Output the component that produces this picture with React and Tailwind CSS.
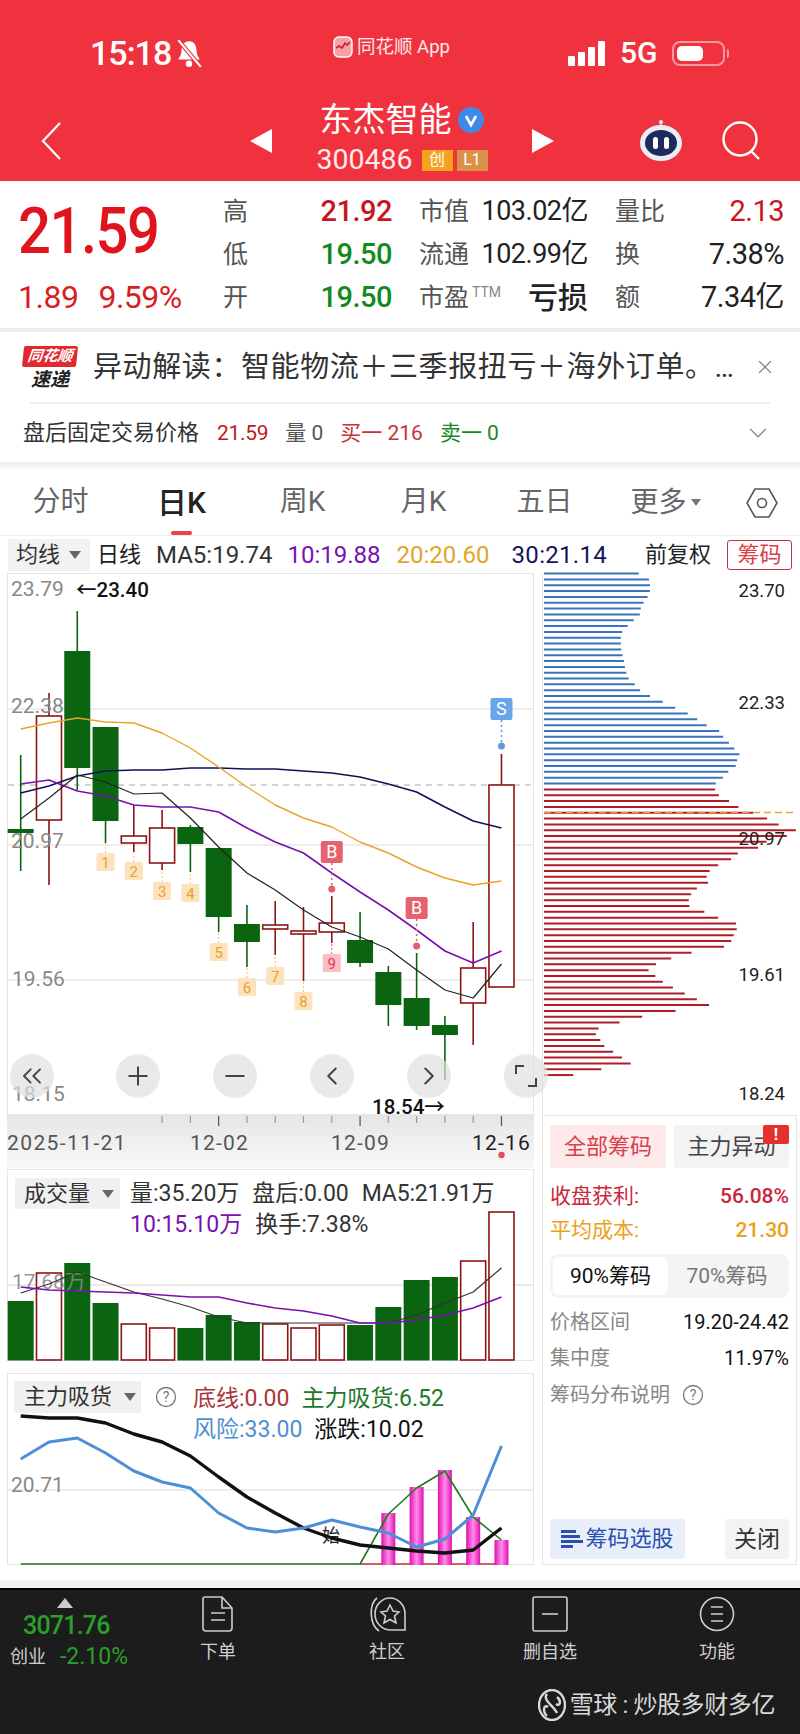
import React from 'react';
import { ChevronsLeft, ChevronLeft, ChevronRight, Plus, Minus, ChevronDown, X } from 'lucide-react';

const xs = Array.from({ length: 18 }, (_, i) => 20.7 + i * 28.28);
const RED = '#8c1414';
const GREEN = '#0b640f';

// kline: [high, top, bottom, low, up?]
const candles = [
  [755, 829, 833, 871, 0],
  [693, 716, 820, 885, 1],
  [611, 651, 768, 790, 0],
  [727, 727, 821, 843, 0],
  [805, 836, 843, 852, 1],
  [810, 828, 863, 870, 1],
  [825, 827, 844, 872, 0],
  [848, 848, 917, 932, 0],
  [905, 924, 942, 967, 0],
  [901, 925, 929, 955, 1],
  [907, 931, 934, 981, 1],
  [896, 923, 932, 943, 1],
  [912, 940, 963, 967, 0],
  [966, 972, 1005, 1026, 0],
  [953, 998, 1026, 1030, 0],
  [1016, 1025, 1035, 1080, 0],
  [922, 968, 1003, 1045, 1],
  [754, 785, 987, 987, 1],
];

const ma5 = [819, 798, 775, 782, 794, 793, 818, 847, 873, 890, 910, 927, 937, 949, 970, 990, 998, 964];
const ma10 = [784, 780, 791, 796, 805, 807, 807, 812, 828, 842, 853, 873, 892, 910, 930, 951, 963, 951];
const ma20 = [729, 723, 718, 722, 723, 733, 748, 767, 787, 805, 818, 827, 842, 853, 867, 878, 885, 881];
const ma30 = [793, 786, 776, 771, 770, 770, 768, 768, 769, 769, 771, 773, 777, 784, 792, 807, 821, 828];

const markers = [
  [3, 853, '1'], [4, 862, '2'], [5, 882, '3'], [6, 884, '4'], [7, 943, '5'],
  [8, 978, '6'], [9, 967, '7'], [10, 992, '8'], [11, 954, '9'],
];

const volTops = [1301, 1273, 1263, 1303, 1324, 1328, 1328, 1315, 1322, 1324, 1328, 1325, 1325, 1307, 1280, 1277, 1261, 1212];
const volUp = [0, 1, 0, 0, 1, 1, 0, 0, 0, 1, 1, 1, 0, 0, 0, 0, 1, 1];
const volBlack = [1293, 1284, 1272, 1282, 1292, 1299, 1307, 1317, 1323, 1323, 1323, 1323, 1323, 1323, 1315, 1303, 1292, 1268];
const volPurple = [1287, 1290, 1291, 1292, 1293, 1295, 1297, 1297, 1303, 1308, 1311, 1316, 1323, 1323, 1320, 1315, 1308, 1297];

const riskLine = [1459, 1442, 1438, 1453, 1471, 1482, 1488, 1513, 1528, 1532, 1528, 1520, 1527, 1533, 1547, 1539, 1515, 1446];
const blackLine = [1416, 1418, 1418, 1423, 1434, 1442, 1456, 1477, 1497, 1513, 1528, 1538, 1545, 1548, 1551, 1553, 1550, 1528];
const greenLine = [1564, 1564, 1564, 1564, 1564, 1564, 1564, 1564, 1564, 1564, 1564, 1564, 1564, 1514, 1488, 1471, 1517, 1540];
const pinkBars = [[13, 1513], [14, 1487], [15, 1470], [16, 1517], [17, 1540]];

const blueBars = [322, 352, 355, 355, 348, 336, 328, 325, 307, 289, 273, 269, 269, 270, 274, 278, 281, 285, 292, 310, 326, 355, 393, 430, 467, 495, 523, 560, 572, 589, 605, 620, 613, 609, 587, 571, 550];
const redBars = [548, 559, 589, 617, 660, 702, 736, 787, 760, 700, 675, 615, 595, 557, 532, 523, 527, 494, 477, 470, 472, 516, 557, 610, 612, 603, 596, 574, 478, 418, 373, 351, 371, 393, 423, 458, 494, 530, 431, 332, 265, 203, 195, 208, 220, 246, 272, 298, 211, 128];

const toPoints = (ys) => ys.map((y, i) => `${xs[i]},${y}`).join(' ');

const Line = ({ ys, color, width = 1.6 }) => (
  <polyline points={toPoints(ys)} fill="none" stroke={color} strokeWidth={width} strokeLinejoin="round" />
);

const Triangle = ({ className }) => <span className={`inline-block w-0 h-0 border-l-[6px] border-r-[6px] border-t-[8px] border-l-transparent border-r-transparent border-t-[#666] ${className || ''}`} />;

const Help = ({ size = 22 }) => (
  <svg width={size} height={size} viewBox="0 0 22 22" className="text-[#777]">
    <circle cx="11" cy="11" r="9.5" fill="none" stroke="currentColor" strokeWidth="1.3" />
    <text x="11" y="16" textAnchor="middle" fontSize="14" fill="currentColor">?</text>
  </svg>
);

const Candle = ({ c, i }) => {
  const x = xs[i];
  const color = c[4] ? RED : GREEN;
  return (
    <g>
      <line x1={x} x2={x} y1={c[0]} y2={c[1]} stroke={color} strokeWidth="1.6" />
      <line x1={x} x2={x} y1={c[2]} y2={c[3]} stroke={color} strokeWidth="1.6" />
      {c[4] ? (
        <rect x={x - 12.5} y={c[1]} width="25" height={c[2] - c[1]} fill="#fff" stroke={color} strokeWidth="1.6" />
      ) : (
        <rect x={x - 13} y={c[1]} width="26" height={c[2] - c[1]} fill={color} />
      )}
    </g>
  );
};

const Tag = ({ x, y, label, color }) => (
  <g>
    <rect x={x - 11} y={y} width="22" height="22" rx="2" fill={color} />
    <text x={x} y={y + 17} textAnchor="middle" fontSize="18" fill="#fff">{label}</text>
  </g>
);

const KChart = () => (
  <svg width="525" height="540" viewBox="8 574 525 540" className="overflow-visible">
    {[709, 845, 980].map((y) => <line key={y} x1="8" x2="533" y1={y} y2={y} stroke="#e8e8e8" strokeWidth="1.5" />)}
    <line x1="8" x2="533" y1="785" y2="785" stroke="#aaa" strokeWidth="1" strokeDasharray="6 5" />
    {candles.map((c, i) => <Candle key={i} c={c} i={i} />)}
    {markers.map(([i, y, t]) => {
      const pink = t === '9';
      return (
        <g key={t}>
          <line x1={xs[i]} x2={xs[i]} y1={y - 10} y2={y} stroke={pink ? '#e0616d' : '#f0c080'} strokeWidth="1" strokeDasharray="2 2" />
          <rect x={xs[i] - 9} y={y} width="18" height="18" rx="1.5" fill={pink ? '#fbbcc6' : '#fde3bd'} />
          <text x={xs[i]} y={y + 15} textAnchor="middle" fontSize="15" fill={pink ? '#d8404e' : '#e9a030'}>{t}</text>
        </g>
      );
    })}
    <Line ys={ma30} color="#10105a" />
    <Line ys={ma20} color="#e6a526" width={1.4} />
    <Line ys={ma10} color="#7a10b0" />
    <Line ys={ma5} color="#222" width={1.2} />
    {/* B / S flags */}
    <line x1={xs[11]} x2={xs[11]} y1="863" y2="889" stroke="#e0616d" strokeWidth="1.5" strokeDasharray="2 3" />
    <circle cx={xs[11]} cy="889" r="3.5" fill="#e0616d" />
    <Tag x={xs[11]} y={841} label="B" color="#e6626e" />
    <line x1={xs[14]} x2={xs[14]} y1="919" y2="946" stroke="#e0616d" strokeWidth="1.5" strokeDasharray="2 3" />
    <circle cx={xs[14]} cy="946" r="3.5" fill="#e0616d" />
    <Tag x={xs[14]} y={897} label="B" color="#e6626e" />
    <line x1={xs[17]} x2={xs[17]} y1="720" y2="746" stroke="#5e9be0" strokeWidth="1.5" strokeDasharray="2 3" />
    <circle cx={xs[17]} cy="746" r="3.5" fill="#5e9be0" />
    <Tag x={xs[17]} y={698} label="S" color="#6aa5ea" />
    {/* axis labels */}
    <g fontSize="21" fill="#888">
      <text x="11" y="596">23.79</text>
      <text x="11" y="713">22.38</text>
      <text x="11" y="848">20.97</text>
      <text x="12" y="986">19.56</text>
      <text x="12" y="1101">18.15</text>
    </g>
    <text x="76" y="597" fontSize="20.5" fontWeight="500" fill="#111">←23.40</text>
    <text x="372" y="1114" fontSize="20.5" fontWeight="500" fill="#111">18.54→</text>
  </svg>
);

const NavButton = ({ children, className }) => (
  <span className={`flex w-[44px] h-[44px] items-center justify-center rounded-full bg-[#e0e0e0]/70 text-[#444] ${className || ''}`}>{children}</span>
);

const DateAxis = () => (
  <svg width="527" height="53" viewBox="7 1115 527 53">
    <defs>
      <linearGradient id="axisBg" x1="0" x2="0" y1="0" y2="1">
        <stop offset="0" stopColor="#e6e6e6" />
        <stop offset="1" stopColor="#f8f8f8" />
      </linearGradient>
    </defs>
    <rect x="7" y="1115" width="527" height="53" fill="url(#axisBg)" />
    {xs.slice(5).map((x, i) => {
      const major = i === 2 || i === 7 || i === 12;
      return <line key={x} x1={x} x2={x} y1="1116" y2={major ? 1126 : 1123} stroke={major ? '#555' : '#999'} strokeWidth="1.2" />;
    })}
    <g fontSize="21" fill="#555">
      <text x="7" y="1150" letterSpacing="1.4">2025-11-21</text>
      <text x="190" y="1150" letterSpacing="1.2">12-02</text>
      <text x="331" y="1150" letterSpacing="1.2">12-09</text>
      <text x="472" y="1150" letterSpacing="1.2" fill="#222">12-16</text>
    </g>
    <circle cx="501.5" cy="1155" r="3.2" fill="#e0505a" />
  </svg>
);

const VolumeChart = () => (
  <svg width="525" height="190" viewBox="8 1170 525 190" className="overflow-visible">
    <line x1="8" x2="533" y1="1285" y2="1285" stroke="#e4e4e4" strokeWidth="1.5" />
    {volTops.map((top, i) => (volUp[i] ? (
      <rect key={i} x={xs[i] - 12.5} y={top} width="25" height={1360 - top} fill="#fff" stroke={RED} strokeWidth="1.6" />
    ) : (
      <rect key={i} x={xs[i] - 13} y={top} width="26" height={1360.5 - top} fill={GREEN} />
    )))}
    <text x="12" y="1289" fontSize="21" fill="#888" fillOpacity="0.9">17.68万</text>
    <Line ys={volBlack} color="#333" width={1.2} />
    <Line ys={volPurple} color="#7a10b0" width={1.6} />
  </svg>
);

const IndicatorChart = () => (
  <svg width="525" height="190" viewBox="8 1374 525 190" className="overflow-visible">
    <defs>
      <linearGradient id="pinkBar" x1="0" x2="1" y1="0" y2="0">
        <stop offset="0" stopColor="#e010b0" />
        <stop offset="0.5" stopColor="#ff8ce8" />
        <stop offset="1" stopColor="#e010b0" />
      </linearGradient>
    </defs>
    <line x1="8" x2="533" y1="1490" y2="1490" stroke="#e6e6e6" strokeWidth="1.5" />
    <text x="11" y="1492" fontSize="21" fill="#888">20.71</text>
    <line x1={xs[12]} x2="508" y1="1564" y2="1564" stroke="#c43030" strokeWidth="1.5" />
    {pinkBars.map(([i, top]) => <rect key={i} x={xs[i] - 7} y={top} width="14" height={1565 - top} fill="url(#pinkBar)" />)}
    <Line ys={greenLine} color="#1d7a1d" width={1.6} />
    <text x="322" y="1542" fontSize="18" fill="#222">始</text>
    <Line ys={blackLine} color="#111" width={3.4} />
    <Line ys={riskLine} color="#4d8fd6" width={3} />
  </svg>
);

const ChipChart = () => (
  <svg width="254" height="540" viewBox="543 574 254 540" className="overflow-visible">
    {blueBars.map((r, i) => {
      const y = 574.6 + i * 5.83;
      return <line key={i} x1="544" x2={530 + r / 2.96} y1={y} y2={y} stroke="#3b74b8" strokeWidth="2" />;
    })}
    {redBars.map((r, i) => {
      const y = 790.4 + i * 5.83;
      return <line key={i} x1="544" x2={530 + r / 2.96} y1={y} y2={y} stroke="#b01c26" strokeWidth="2" />;
    })}
    <line x1="544" x2="796" y1="813.5" y2="813.5" stroke="#f0a030" strokeWidth="1.4" strokeDasharray="7 4" />
    <g fontSize="18.5" fill="#222" textAnchor="end">
      <text x="785" y="598">23.70</text>
      <text x="785" y="710">22.33</text>
      <text x="785" y="846">20.97</text>
      <text x="785" y="982">19.61</text>
      <text x="785" y="1101">18.24</text>
    </g>
  </svg>
);

const Quote = ({ label, value, valueClass, labelExtra }) => (
  <div className="flex h-[43px] items-center justify-between">
    <span className="flex items-start text-[25px] leading-none text-[#555]">{label}{labelExtra}</span>
    <span className={`leading-none ${valueClass}`}>{value}</span>
  </div>
);

const BottomItem = ({ icon, label }) => (
  <div className="flex flex-col items-center">
    <div className="flex h-[36px] items-center">{icon}</div>
    <span className="mt-[11px] text-[18px] leading-none text-[#d0d0d0]">{label}</span>
  </div>
);

export default function App() {
  return (
    <div className="flex h-[1734px] w-[800px] flex-col overflow-hidden bg-white font-[family-name:Roboto,'Noto_Sans_CJK_SC',sans-serif]">
      {/* red header */}
      <header className="flex h-[181px] flex-col bg-[#f0323e] text-white">
        <div className="mt-[35px] flex h-[36px] items-center pl-[90px]">
          <div className="flex w-[243px] items-center">
            <span className="text-[34px] font-medium leading-none tracking-[-1px]">15:18</span>
            <svg width="30" height="32" viewBox="0 0 28 28" className="ml-[3px]">
              <path d="M14 3c5 0 7 4 7 9 0 4 2 6 3 8H4c1-2 3-4 3-8 0-5 2-9 7-9z" fill="#fff" />
              <circle cx="14" cy="24" r="3" fill="#fff" />
              <line x1="4" y1="2" x2="25" y2="27" stroke="#f0323e" strokeWidth="4" />
              <line x1="4" y1="2" x2="25" y2="27" stroke="#fff" strokeWidth="2" />
            </svg>
          </div>
          <div className="mb-[12px] flex w-[235px] items-center text-white/90">
            <svg width="20" height="22" viewBox="0 0 20 22">
              <rect x="1" y="1" width="18" height="20" rx="5" fill="#f7a0a5" stroke="#fff" strokeWidth="1.5" />
              <path d="M3 12l3-2 3 2 3-5 2 2 3-3" fill="none" stroke="#d02030" strokeWidth="1.6" />
            </svg>
            <span className="ml-[4px] text-[18.5px] leading-none">同花顺 App</span>
          </div>
          <div className="flex items-end gap-[3px]">
            {['h-[10px]', 'h-[14px]', 'h-[19px]', 'h-[25px]'].map((h) => <span key={h} className={`w-[7px] rounded-[1px] bg-white ${h}`} />)}
          </div>
          <span className="ml-[15px] text-[30px] font-medium leading-none">5G</span>
          <div className="ml-[14px] flex h-[25px] w-[53px] items-center rounded-[8px] border-2 border-white/50 p-[3px]">
            <span className="h-full w-[26px] rounded-[5px] bg-white" />
          </div>
          <span className="ml-[2px] h-[9px] w-[2px] rounded-r bg-white/50" />
        </div>
        <div className="mt-[29px] flex h-[81px] items-center pl-[41px]">
          <svg width="20" height="38" viewBox="0 0 20 38">
            <polyline points="19,1 2,19 19,37" fill="none" stroke="#fff" strokeWidth="2.2" />
          </svg>
          <svg width="22" height="24" viewBox="0 0 22 24" className="ml-[189px]"><polygon points="22,0 22,24 0,12" fill="#fff" /></svg>
          <div className="flex w-[260px] flex-col items-center self-stretch">
            <div className="flex h-[40px] items-center">
              <span className="text-[33px] leading-none">东杰智能</span>
              <svg width="28" height="28" viewBox="0 0 28 28" className="ml-[5px]">
                <circle cx="14" cy="14" r="13" fill="#3f8ae8" />
                <path d="M9 10l5 9 5-9" fill="none" stroke="#fff" strokeWidth="2.6" />
              </svg>
            </div>
            <div className="flex h-[42px] items-center">
              <span className="text-[28.5px] leading-none text-white/90">300486</span>
              <span className="ml-[9px] flex h-[21px] w-[31px] items-center justify-center bg-[#f5a21e] text-[16px] leading-none">创</span>
              <span className="ml-[4px] flex h-[21px] w-[31px] items-center justify-center bg-[#d9924a] text-[16px] leading-none">L1</span>
            </div>
          </div>
          <svg width="22" height="24" viewBox="0 0 22 24"><polygon points="0,0 0,24 22,12" fill="#fff" /></svg>
          <svg width="46" height="44" viewBox="0 0 46 44" className="ml-[84px]">
            <circle cx="23" cy="3" r="2" fill="#e9edf7" />
            <line x1="23" y1="4" x2="23" y2="9" stroke="#e9edf7" strokeWidth="1.5" />
            <ellipse cx="23" cy="24" rx="21" ry="18" fill="#e9edf7" />
            <ellipse cx="23" cy="24" rx="16" ry="13" fill="#1c2a5c" />
            <rect x="15" y="18" width="5" height="12" rx="2.5" fill="#fff" />
            <rect x="26" y="18" width="5" height="12" rx="2.5" fill="#fff" />
          </svg>
          <svg width="40" height="40" viewBox="0 0 40 40" className="ml-[38px]">
            <circle cx="18" cy="18" r="16.5" fill="none" stroke="#fff" strokeWidth="2.4" />
            <line x1="29" y1="30" x2="37" y2="38" stroke="#fff" strokeWidth="2.4" />
          </svg>
        </div>
      </header>

      {/* quote */}
      <section className="flex h-[147px] pt-[9px]">
        <div className="flex w-[223px] flex-col pl-[18px]">
          <span className="mt-[11px] origin-center scale-y-[1.13] text-[58px] font-medium leading-none tracking-[-1.5px] text-[#e0141c]">21.59</span>
          <div className="mt-[22px] flex gap-[20px] text-[32px] leading-none tracking-[-0.5px] text-[#d81e24]">
            <span>1.89</span>
            <span>9.59%</span>
          </div>
        </div>
        <div className="grid grid-cols-[169px_169px_169px] content-start gap-x-[27px]">
          <Quote label="高" value="21.92" valueClass="text-[29px] font-medium tracking-[-0.5px] text-[#c8161c]" />
          <Quote label="市值" value="103.02亿" valueClass="text-[27px] tracking-[-0.5px] text-[#222]" />
          <Quote label="量比" value="2.13" valueClass="text-[29px] tracking-[-0.5px] text-[#c8161c]" />
          <Quote label="低" value="19.50" valueClass="text-[29px] font-medium tracking-[-0.5px] text-[#148a1e]" />
          <Quote label="流通" value="102.99亿" valueClass="text-[27px] tracking-[-0.5px] text-[#222]" />
          <Quote label="换" value="7.38%" valueClass="text-[29px] tracking-[-0.5px] text-[#222]" />
          <Quote label="开" value="19.50" valueClass="text-[29px] font-medium tracking-[-0.5px] text-[#148a1e]" />
          <Quote label="市盈" labelExtra={<span className="ml-[3px] text-[14px] text-[#888]">TTM</span>} value="亏损" valueClass="text-[30px] font-medium text-[#222]" />
          <Quote label="额" value="7.34亿" valueClass="text-[29px] tracking-[-0.5px] text-[#222]" />
        </div>
      </section>
      <div className="h-[4px] bg-[#ededed]" />

      {/* news */}
      <section className="h-[130px]">
        <div className="flex h-[70px] items-center pl-[23px]">
          <div className="flex w-[54px] flex-col items-center">
            <span className="w-full -skew-x-6 rounded-[2px] bg-[#e2272f] py-[3px] text-center text-[15px] font-bold italic leading-none text-white">同花顺</span>
            <span className="mt-[3px] text-[19px] font-bold italic leading-none text-[#222]">速递</span>
          </div>
          <span className="ml-[16px] whitespace-nowrap text-[29px] leading-none tracking-[0.6px] text-[#333]">异动解读：智能物流＋三季报扭亏＋海外订单。…</span>
          <X size={22} strokeWidth={1.4} className="ml-[19px] text-[#888]" />
        </div>
        <div className="mx-[30px] h-[2px] bg-[#f0f0f0]" />
        <div className="flex h-[58px] items-center pl-[23px] text-[22px] leading-none">
          <span className="text-[#333]">盘后固定交易价格</span>
          <span className="ml-[18px] text-[21px] tracking-[-0.3px] text-[#c01a1a]">21.59</span>
          <span className="ml-[17px] text-[21px] text-[#555]">量 0</span>
          <span className="ml-[17px] text-[21px] text-[#c8323a]">买一 216</span>
          <span className="ml-[17px] text-[21px] text-[#148a1e]">卖一 0</span>
          <ChevronDown size={30} strokeWidth={1} className="ml-auto mr-[27px] text-[#888]" />
        </div>
      </section>
      <div className="h-[8px] bg-gradient-to-b from-[#ededed] to-white" />

      {/* period tabs */}
      <nav className="flex h-[66px] items-center border-b border-[#eeeeee]">
        <div className="grid grid-cols-[repeat(6,121px)] text-[28px] leading-none text-[#666]">
          <span className="text-center">分时</span>
          <span className="relative text-center text-[30px] font-medium text-[#222]">
            日K
            <span className="absolute left-[50px] top-[43px] h-[4px] w-[21px] rounded-full bg-[#f0404a]" />
          </span>
          <span className="text-center">周K</span>
          <span className="text-center">月K</span>
          <span className="text-center">五日</span>
          <span className="flex items-center justify-center">
            更多
            <span className="ml-[4px] h-0 w-0 border-l-[5px] border-r-[5px] border-t-[7px] border-l-transparent border-r-transparent border-t-[#777]" />
          </span>
        </div>
        <svg width="32" height="32" viewBox="0 0 32 32" className="ml-[20px]">
          <polygon points="9,2 23,2 31,16 23,30 9,30 1,16" fill="none" stroke="#555" strokeWidth="1.6" />
          <circle cx="16" cy="16" r="4.5" fill="none" stroke="#555" strokeWidth="1.6" />
        </svg>
      </nav>

      {/* MA legend */}
      <div className="flex h-[37px] items-center pl-[8px] text-[24px] leading-none">
        <span className="flex h-[32px] w-[82px] items-center bg-[#f2f2f2] pl-[8px] text-[22px] text-[#333]">
          均线
          <Triangle className="ml-[9px]" />
        </span>
        <span className="ml-[7px] text-[22px] text-[#222]">日线</span>
        <span className="ml-[15px] text-[#333]">MA5:19.74</span>
        <span className="ml-[15px] text-[#7a10b0]">10:19.88</span>
        <span className="ml-[16px] text-[#e2a528]">20:20.60</span>
        <span className="ml-[22px] tracking-[0.3px] text-[#14145a]">30:21.14</span>
        <span className="ml-auto text-[22px] text-[#222]">前复权</span>
        <span className="ml-[16px] mr-[8px] flex h-[30px] w-[65px] items-center justify-center rounded-[3px] border border-[#b8383f] text-[22px] text-[#d8404a]">筹码</span>
      </div>

      {/* charts */}
      <main className="flex gap-[8px] pl-[7px]">
        <div className="flex w-[527px] flex-col">
          <div className="relative h-[542px] border border-[#e6e6e6]">
            <KChart />
            <div className="absolute left-[2px] top-[480px] flex gap-[53px]">
              <NavButton className="mr-[9px]"><ChevronsLeft size={32} strokeWidth={1.4} /></NavButton>
              <NavButton><Plus size={30} strokeWidth={1.6} /></NavButton>
              <NavButton><Minus size={30} strokeWidth={1.6} /></NavButton>
              <NavButton><ChevronLeft size={30} strokeWidth={1.6} /></NavButton>
              <NavButton><ChevronRight size={30} strokeWidth={1.6} /></NavButton>
              <NavButton>
                <svg width="24" height="24" viewBox="0 0 24 24" fill="none" stroke="#444" strokeWidth="2">
                  <polyline points="2,10 2,2 10,2" />
                  <polyline points="22,14 22,22 14,22" />
                </svg>
              </NavButton>
            </div>
          </div>
          <DateAxis />
          <div className="relative mt-px h-[192px] border border-[#e6e6e6]">
            <VolumeChart />
            <div className="absolute left-[7px] right-0 top-[8px] flex flex-wrap text-[23px] leading-none">
              <span className="flex h-[31px] w-[105px] items-center bg-[#f0f0f0] pl-[9px] text-[22px] text-[#333]">
                成交量
                <Triangle className="ml-[12px]" />
              </span>
              <div className="ml-[10px] flex w-[390px] flex-wrap items-center gap-x-[13px] gap-y-[8px] pt-[4px] text-[#333]">
                <span>量:35.20万</span>
                <span>盘后:0.00</span>
                <span className="tracking-[-0.2px]">MA5:21.91万</span>
                <span className="text-[#7a10b0]">10:15.10万</span>
                <span>换手:7.38%</span>
              </div>
            </div>
          </div>
          <div className="relative mt-[12px] h-[192px] border border-[#e6e6e6]">
            <IndicatorChart />
            <div className="absolute left-[6px] right-0 top-[7px] flex text-[23px] leading-none">
              <span className="flex h-[32px] w-[127px] items-center bg-[#f0f0f0] pl-[10px] text-[22px] text-[#333]">
                主力吸货
                <Triangle className="ml-[12px]" />
              </span>
              <span className="ml-[14px] mt-[5px]"><Help /></span>
              <div className="ml-[16px] flex w-[300px] flex-wrap gap-x-[12px] gap-y-[8px] pt-[6px]">
                <span className="text-[#a83838]">底线:0.00</span>
                <span className="text-[#1d7a2a]">主力吸货:6.52</span>
                <span className="text-[#4f8fd0]">风险:33.00</span>
                <span className="text-[#111]">涨跌:10.02</span>
              </div>
            </div>
          </div>
        </div>

        <div className="flex w-[255px] flex-col">
          <div className="h-[542px] border-l border-[#e6e6e6]">
            <ChipChart />
          </div>
          <div className="flex h-[450px] flex-col border border-[#e6e6e6] px-[7px] pb-[5px] pt-[9px]">
            <div className="flex gap-[8px] text-[22px] leading-none">
              <span className="flex h-[43px] w-[116px] items-center justify-center rounded-[3px] bg-[#fde8ea] text-[#d8404a]">全部筹码</span>
              <span className="relative flex h-[43px] w-[115px] items-center justify-center rounded-[3px] bg-[#f3f3f3] text-[#444]">
                主力异动
                <span className="absolute right-0 top-0 flex h-[19px] w-[26px] items-center justify-center rounded-[2px] bg-[#e53030] text-[16px] font-bold text-white">!</span>
              </span>
            </div>
            <div className="mt-[18px] flex items-center justify-between text-[21px] leading-none text-[#c8283c]">
              <span>收盘获利:</span>
              <span className="font-medium">56.08%</span>
            </div>
            <div className="mt-[13px] flex items-center justify-between text-[21px] leading-none text-[#eba020]">
              <span>平均成本:</span>
              <span className="font-medium">21.30</span>
            </div>
            <div className="mt-[13px] flex h-[44px] items-center rounded-[8px] bg-[#f4f4f4] p-[3px] text-[21px] leading-none">
              <span className="flex h-full w-[115px] items-center justify-center rounded-[6px] bg-white text-[#111]">90%筹码</span>
              <span className="flex h-full flex-1 items-center justify-center text-[#777]">70%筹码</span>
            </div>
            <div className="mt-[14px] flex items-center justify-between text-[20px] leading-none">
              <span className="text-[#888]">价格区间</span>
              <span className="text-[#111]">19.20-24.42</span>
            </div>
            <div className="mt-[16px] flex items-center justify-between text-[20px] leading-none">
              <span className="text-[#888]">集中度</span>
              <span className="text-[#111]">11.97%</span>
            </div>
            <div className="mt-[16px] flex items-center text-[20px] leading-none text-[#888]">
              <span>筹码分布说明</span>
              <span className="ml-[12px]"><Help /></span>
            </div>
            <div className="mt-auto flex justify-between text-[22px] leading-none">
              <span className="flex h-[40px] w-[135px] items-center justify-center rounded-[3px] bg-[#e8eefa] text-[#2a4fb0]">
                <svg width="22" height="22" viewBox="0 0 22 22" className="mr-[2px]" fill="#2a4fb0">
                  <rect x="0" y="2" width="15" height="3" />
                  <rect x="0" y="7" width="19" height="3" />
                  <rect x="0" y="12" width="22" height="3" />
                  <rect x="0" y="17" width="12" height="3" />
                </svg>
                筹码选股
              </span>
              <span className="flex h-[40px] w-[64px] items-center justify-center rounded-[3px] bg-[#f3f3f3] text-[23px] text-[#333]">关闭</span>
            </div>
          </div>
        </div>
      </main>

      <div className="mt-auto h-[8px] bg-[#f1f1f1]" />
      {/* bottom bar */}
      <footer className="relative h-[146px] border-t-2 border-black bg-[#1c1c1c]">
        <div className="flex h-[90px] pt-[6px]">
          <div className="flex w-[140px] flex-col items-start pl-[10px]">
            <span className="ml-[47px] mt-[2px] h-0 w-0 border-b-[10px] border-l-[8px] border-r-[8px] border-b-[#ccc] border-l-transparent border-r-transparent" />
            <span className="ml-[13px] mt-[5px] text-[25px] font-medium leading-none tracking-[-0.8px] text-[#2aa02a]">3071.76</span>
            <div className="mt-[7px] flex items-center">
              <span className="text-[18px] leading-none text-[#ccc]">创业</span>
              <span className="ml-[14px] text-[23px] leading-none text-[#2aa02a]">-2.10%</span>
            </div>
          </div>
          <div className="ml-[58px] w-[40px]">
            <BottomItem
              label="下单"
              icon={
                <svg width="32" height="36" viewBox="0 0 32 36" fill="none" stroke="#ccc" strokeWidth="1.6">
                  <path d="M3 1h17l10 11v20a3 3 0 0 1-3 3H4a3 3 0 0 1-3-3V3a2 2 0 0 1 2-2z" />
                  <path d="M20 1v11h10" />
                  <path d="M9 17h14M9 24h14" />
                </svg>
              }
            />
          </div>
          <div className="ml-[129px] w-[40px]">
            <BottomItem
              label="社区"
              icon={
                <svg width="40" height="36" viewBox="0 0 40 36" fill="none" stroke="#ccc" strokeWidth="1.6">
                  <path d="M10 2C2 8 2 28 12 35" />
                  <path d="M38 34H24C14 34 8 26 8 18 8 9 15 2 23 2s15 7 15 16z" />
                  <polygon points="23,9 26,15 32,16 27.5,20 29,27 23,23.5 17,27 18.5,20 14,16 20,15" />
                </svg>
              }
            />
          </div>
          <div className="ml-[113px] w-[60px]">
            <BottomItem
              label="删自选"
              icon={
                <svg width="36" height="36" viewBox="0 0 36 36" fill="none" stroke="#ccc" strokeWidth="1.6">
                  <rect x="1" y="1" width="34" height="34" rx="2" />
                  <path d="M10 18h16" />
                </svg>
              }
            />
          </div>
          <div className="ml-[117px] w-[40px]">
            <BottomItem
              label="功能"
              icon={
                <svg width="36" height="36" viewBox="0 0 36 36" fill="none" stroke="#ccc" strokeWidth="1.6">
                  <circle cx="18" cy="18" r="16.5" />
                  <path d="M12 11h12M12 18h12M12 25h12" />
                </svg>
              }
            />
          </div>
        </div>
        <div className="absolute bottom-[13px] right-[25px] flex items-center text-[24px] leading-none tracking-[-0.4px] text-[#d8d8d8]">
          <svg width="28" height="32" viewBox="0 0 28 32" fill="none" stroke="#d8d8d8" strokeWidth="2.4">
            <ellipse cx="14" cy="16" rx="13" ry="15" />
            <path d="M9 5C4 11 16 17 19 24M19 8C24 12 22 18 18 15M9 27C4 22 6 15 10 18" />
          </svg>
          <span className="ml-[4px]">雪球 : 炒股多财多亿</span>
        </div>
      </footer>
    </div>
  );
}
